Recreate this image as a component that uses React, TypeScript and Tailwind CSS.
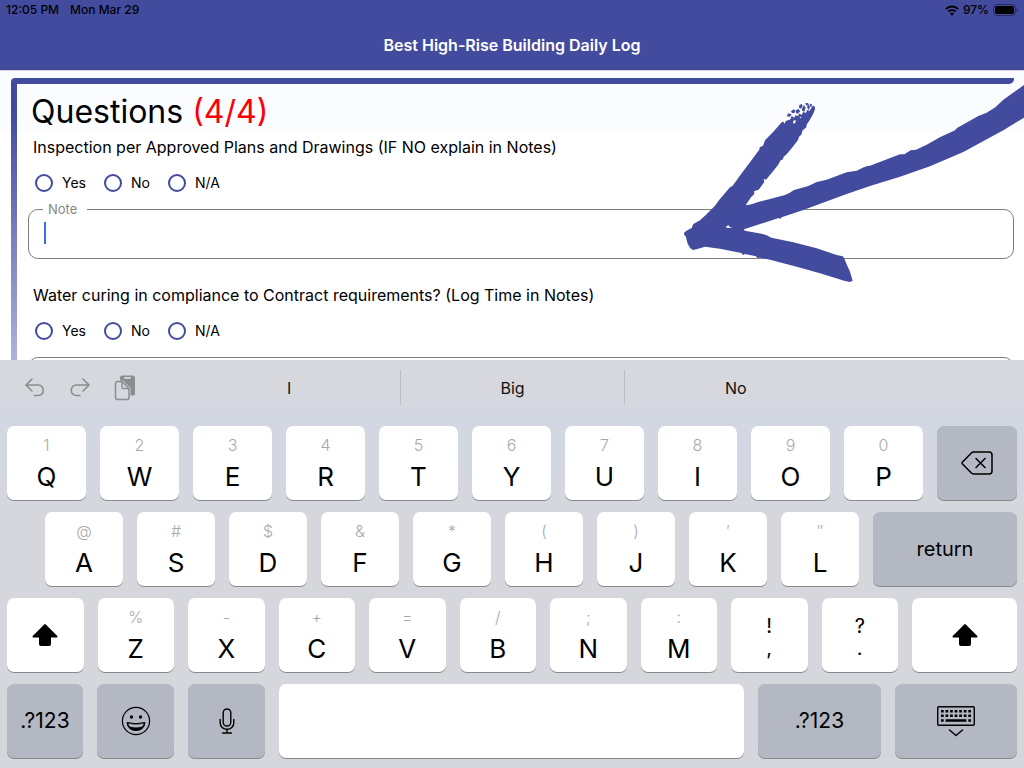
import React from "react";

type KeyProps = {
  label: string;
  hint?: string;
  className: string;
};

const keyBase =
  "flex h-[74px] min-w-0 basis-0 flex-col items-center rounded-[7px] shadow-[0_1px_0_#88898d]";
const whiteKey = "bg-white text-black";
const grayKey = "justify-center bg-[#b3b8c2] text-black";

function LetterKey({ label, hint, className }: KeyProps) {
  return (
    <button
      type="button"
      aria-label={label}
      className={`${keyBase} ${whiteKey} ${className} pt-2`}
    >
      <span className="text-[16px] leading-[22px] font-light text-[#a9a9ab]">{hint}</span>
      <span className="text-[26px] leading-[42px]">{label}</span>
    </button>
  );
}

function PunctuationKey({ label, hint, className }: KeyProps) {
  return (
    <button
      type="button"
      aria-label={label}
      className={`${keyBase} ${whiteKey} ${className} pt-4`}
    >
      <span className="text-[20px] leading-[24px]">{hint}</span>
      <span className="text-[20px] leading-[20px]">{label}</span>
    </button>
  );
}

function ShiftKey({ className }: { className: string }) {
  return (
    <button
      type="button"
      aria-label="shift"
      className={`${keyBase} ${whiteKey} ${className} justify-center`}
    >
      <svg width="26" height="22" viewBox="0 0 26 22" aria-hidden="true">
        <path
          d="M12.2.4Q13 -.2 13.8.4L25.3 12Q26 13.3 24.6 13.4H19V20Q19 22 17 22H9Q7 22 7 20V13.4H1.4Q0 13.3.7 12Z"
          fill="#000"
        />
      </svg>
    </button>
  );
}

const topRow = [
  ["Q", "1"],
  ["W", "2"],
  ["E", "3"],
  ["R", "4"],
  ["T", "5"],
  ["Y", "6"],
  ["U", "7"],
  ["I", "8"],
  ["O", "9"],
  ["P", "0"],
];
const homeRow = [
  ["A", "@"],
  ["S", "#"],
  ["D", "$"],
  ["F", "&"],
  ["G", "*"],
  ["H", "("],
  ["J", ")"],
  ["K", "′"],
  ["L", "″"],
];
const bottomRow = [
  ["Z", "%"],
  ["X", "-"],
  ["C", "+"],
  ["V", "="],
  ["B", "/"],
  ["N", ";"],
  ["M", ":"],
];

function Keyboard() {
  return (
    <section
      aria-label="Keyboard"
      className="relative shrink-0 bg-[linear-gradient(#d7d8dd_0px,#d6d8de_30px,#d3d7e2_60px,#d4d7e1_120px,#d6d7dc_160px)] pb-[10px]"
    >
      <div className="flex h-[66px] items-start pt-[10px]">
        <div className="flex h-[35px] w-[178px] shrink-0 items-center pl-6 text-[#8b8c90]">
          <button type="button" aria-label="Undo" className="w-[45px]">
            <svg width="22" height="22" viewBox="0 0 22 22" fill="none" stroke="currentColor" strokeWidth="1.6" strokeLinecap="round" strokeLinejoin="round">
              <path d="M8 2 2 8l6 6M2 8h12.2a5 5 0 0 1 5 5.2 5 5 0 0 1-5 5.3H10.5" />
            </svg>
          </button>
          <button type="button" aria-label="Redo" className="w-[45px]">
            <svg width="22" height="22" viewBox="0 0 22 22" fill="none" stroke="currentColor" strokeWidth="1.6" strokeLinecap="round" strokeLinejoin="round">
              <path d="m14 2 6 6-6 6M20 8H7.300a5 5 0 0 0-5 5.200 5 5 0 0 0 5 5.300H11" />
            </svg>
          </button>
          <button type="button" aria-label="Paste">
            <svg width="22" height="26" viewBox="0 0 22 26">
              <path d="M8.500 0.500H18.500a2.500 2.500 0 0 1 2.500 2.500v15a2.500 2.500 0 0 1-2.500 2.500h-2v-7.500L9 5.500H6V3a2.500 2.500 0 0 1 2.500-2.500Z" fill="currentColor" />
              <rect x="10" y="2" width="7" height="1.800" rx=".9" fill="#d6d8de" />
              <path d="M3.500 6.500h4.700l6.800 7v9a2 2 0 0 1-2 2H3.500a2 2 0 0 1-2-2v-14a2 2 0 0 1 2-2Z" fill="#d6d8de" stroke="currentColor" strokeWidth="1.500" />
              <path d="M8 7v5a1.500 1.500 0 0 0 1.500 1.500H15" fill="none" stroke="currentColor" strokeWidth="1.500" />
            </svg>
          </button>
        </div>
        <div className="flex h-[35px] flex-1 text-[16px] text-[#111]">
          <button type="button" className="flex-1">I</button>
          <button type="button" className="flex-1 border-x border-[#bcbec4]">Big</button>
          <button type="button" className="flex-1">No</button>
        </div>
        <div className="w-[177px] shrink-0" />
      </div>

      <div className="flex flex-col gap-3 px-[7px]">
        <div className="flex gap-[14px]">
          {topRow.map(([label, hint]) => (
            <LetterKey key={label} label={label} hint={hint} className="grow-[79]" />
          ))}
          <button type="button" aria-label="delete" className={`${keyBase} ${grayKey} grow-[80]`}>
            <svg width="32" height="24" viewBox="0 0 32 24" fill="none" stroke="#000" strokeWidth="1.5" strokeLinecap="round" strokeLinejoin="round">
              <path d="M12.500 1H28a3 3 0 0 1 3 3v16a3 3 0 0 1-3 3H12.500a3 3 0 0 1-2.100-.9L1.500 13a1.500 1.500 0 0 1 0-2l8.900-9.100a3 3 0 0 1 2.100-.9Z" />
              <path d="m15 7.500 9 9m0-9-9 9" />
            </svg>
          </button>
        </div>

        <div className="flex gap-[14px] pl-[38px]">
          {homeRow.map(([label, hint]) => (
            <LetterKey key={label} label={label} hint={hint} className="grow-[78]" />
          ))}
          <button type="button" className={`${keyBase} ${grayKey} grow-[144] text-[20px]`}>
            return
          </button>
        </div>

        <div className="flex gap-[14px]">
          <ShiftKey className="grow-[51]" />
          {bottomRow.map(([label, hint]) => (
            <LetterKey key={label} label={label} hint={hint} className="grow-[51]" />
          ))}
          <PunctuationKey label="," hint="!" className="grow-[51]" />
          <PunctuationKey label="." hint="?" className="grow-[51]" />
          <ShiftKey className="grow-[70]" />
        </div>

        <div className="flex gap-[14px]">
          <button type="button" className={`${keyBase} ${grayKey} grow-[76] text-[21px]`}>
            .?123
          </button>
          <button type="button" aria-label="Emoji" className={`${keyBase} ${grayKey} grow-[77]`}>
            <svg width="30" height="30" viewBox="0 0 30 30">
              <circle cx="15" cy="15" r="13.600" fill="none" stroke="#000" strokeWidth="1.200" />
              <ellipse cx="10.500" cy="11" rx="1.600" ry="1.700" />
              <ellipse cx="19.500" cy="11" rx="1.600" ry="1.700" />
              <path d="M6 16.500q9 2.500 18 0-1 8-9 8t-9-8Z" stroke="#000" strokeWidth="1" strokeLinejoin="round" />
              <path d="M7.300 17.500q7.700 2.200 15.400 0-.4 2.200-2 3.200-5.700 1.600-11.400 0-1.600-1-2-3.200Z" fill="#b3b8c2" />
            </svg>
          </button>
          <button type="button" aria-label="Dictate" className={`${keyBase} ${grayKey} grow-[77]`}>
            <svg width="16" height="26" viewBox="0 0 16 26" fill="none" stroke="#000" strokeWidth="1.400" strokeLinecap="round">
              <rect x="4.200" y="1" width="7.600" height="17" rx="3.800" />
              <path d="M1.200 11.500V15a6.500 6.200 0 0 0 6.800 6.200A6.500 6.200 0 0 0 14.800 15v-3.500M8 21.500V25M3.500 25h9" />
            </svg>
          </button>
          <button type="button" aria-label="space" className={`${keyBase} ${whiteKey} grow-[465]`} />
          <button type="button" className={`${keyBase} ${grayKey} grow-[123] text-[21px]`}>
            .?123
          </button>
          <button type="button" aria-label="Hide keyboard" className={`${keyBase} ${grayKey} grow-[122]`}>
            <svg width="38" height="32" viewBox="0 0 38 32" fill="none" stroke="#000">
              <rect x=".7" y="1.700" width="36.600" height="18.600" rx="1.200" strokeWidth="1.400" />
              <path d="M4 6.300h30M4 10.800h30" strokeWidth="2.600" strokeDasharray="2.700 1.850" />
              <path d="M4 15.500h2.700M8.600 15.500h20.800M31.300 15.500H34" strokeWidth="2.600" />
              <path d="m12.500 25 6.500 5.500 6.500-5.500" strokeWidth="1.500" strokeLinecap="round" strokeLinejoin="round" />
            </svg>
          </button>
        </div>
      </div>
    </section>
  );
}

function AnswerOptions({ name }: { name: string }) {
  return (
    <div className="flex h-[18px] items-center gap-[18px] pl-[7px] text-[14px] leading-[18px]">
      {["Yes", "No", "N/A"].map((answer) => (
        <label key={answer} className="flex items-center gap-[9px]">
          <input
            type="radio"
            name={name}
            value={answer}
            className="size-[18px] appearance-none rounded-full border-2 border-[#444b9f] checked:bg-[#444b9f]"
          />
          {answer}
        </label>
      ))}
    </div>
  );
}

function BrushArrow() {
  return (
    <svg
      className="pointer-events-none absolute top-0 right-0"
      width="354"
      height="220"
      viewBox="0 0 1062 660"
      aria-hidden="true"
    >
      <path
        fill="#434b9f"
        d="M43 484 52 478 65 471 70 459 90 448 108 431 135 404 148 386 180 349 188 344 215 307 240 274 262 244 268 236 269 229 279 224 285 208 310 182 322 169 335 154 340 152 344 158 347 150 356 147 362 141 365 135 373 140 376 133 384 135 388 127 394 132 400 123 407 125 411 117 418 120 424 111 429 114 434 107 435 115 429 130 416 152 411 159 408 170 398 178 394 191 387 197 384 207 368 228 350 250 341 257 339 265 332 268 324 282 308 302 288 326 281 324 283 333 266 356 252 361 253 369 243 379 227 403 245 400 262 394 300 384 345 372 358 366 372 357 415 345 440 333 470 326 530 304 560 299 578 290 592 285 600 284 690 250 703 250 722 238 738 236 770 221 811 198 855 178 861 171 925 135 950 125 976 109 1000 86 1062 42V140L1000 178 880 243 780 286 690 317 600 345 530 369 400 417 335 439 331 444 326 441 222 475 224 479 275 488 290 493 304 500 370 514 440 532 500 552 518 556 522 561 530 580 540 602 548 629 540 633 525 630 450 607 380 587 300 566 270 560 262 561 258 556 225 549 219 552 214 546 150 533 105 527 79 535 69 537 61 532 53 518 47 496 42 491Z"
      />
      <path
        fill="#434b9f"
        d="m350 136 5-9 10 3-5 7ZM363 121l8-6 5 4-3 8-7-1ZM378 117l7-3 6 7-9 8-5-5ZM388 102l7-3 3 6-5 8-6-3ZM396 113l6-11 5 8-4 12-7-3ZM405 97l9-1 3 5-7 3ZM411 107l5-6 4 8-5 9ZM420 98l6 2-2 9-5-3ZM427 105l6-1 1 7-8 10-2-9Z"
      />
      <path fill="#fff" d="m168 467 7-4 4 5 8 1-8 2-9-1ZM370 150l5-3 3 4-5 7-4-2ZM358 142l5-2-2 5-5 2ZM389 137l6 2-5 3ZM404 122l6-3-2 7Z" />
    </svg>
  );
}

export default function App() {
  return (
    <div className="flex h-screen flex-col overflow-hidden bg-white font-['Inter','Liberation_Sans',sans-serif] text-black">
      <header className="shrink-0 border-b border-[#d3d4da] bg-[#434b9f]">
        <div className="flex h-5 items-center justify-between pr-[6px] pl-[6px] text-[12px] font-medium">
          <div className="flex gap-[11px]">
            <span>12:05 PM</span>
            <span>Mon Mar 29</span>
          </div>
          <div className="flex items-center gap-1">
            <svg width="14" height="11" viewBox="0 0 14 11" fill="none" stroke="#000" strokeWidth="1.900">
              <path d="M.9 4.100a8.600 8.600 0 0 1 12.200 0M3.200 6.700a5.400 5.400 0 0 1 7.600 0" />
              <path d="m4.900 8.600a3 3 0 0 1 4.200 0L7 10.800Z" fill="#000" stroke="none" />
            </svg>
            <span>97%</span>
            <svg width="25" height="12" viewBox="0 0 25 12">
              <rect x=".5" y=".5" width="22" height="11" rx="3.200" fill="none" stroke="#000" strokeOpacity=".4" />
              <rect x="2" y="2" width="19" height="8" rx="1.700" />
              <path d="M23.500 4q1.300.6 1.300 2t-1.300 2Z" fillOpacity=".45" />
            </svg>
          </div>
        </div>
        <h1 className="flex h-[50px] items-center justify-center text-[16px] font-semibold text-white">
          Best High-Rise Building Daily Log
        </h1>
      </header>

      <main className="relative min-h-0 flex-1 overflow-hidden bg-[linear-gradient(#fbfcff_60px,#fff_60px)] pt-[7px] pr-[10px] pl-[11px]">
        <div className="h-[6px] rounded-tl-[4px] rounded-br-[5px] bg-[#434b9f]" />
        <div className="flex">
          <div className="w-[6px] shrink-0 bg-[linear-gradient(#434b9f_30px,#b0b4dc_280px)]" />
          <form className="flex min-w-0 flex-1 flex-col pl-[11px]">
            <h2 className="mt-2 pl-[3px] text-[32px] leading-[40px]">
              Questions <span className="text-[#fb0007]">(4/4)</span>
            </h2>
            <section className="h-[148px] pt-1">
              <p className="pl-[5px] text-[16px] leading-[22px]">
                Inspection per Approved Plans and Drawings (IF NO explain in Notes)
              </p>
              <div className="pt-[16px]">
                <AnswerOptions name="inspection" />
              </div>
              <fieldset className="relative mt-[9px] h-[58px] rounded-[10px] border border-[#7d7d7d] px-[14px]">
                <legend className="h-4 pr-[10px] pl-[5px] text-[13px] leading-[16px] text-[#858585]">
                  <label htmlFor="note">Note</label>
                </legend>
                <input
                  id="note"
                  type="text"
                  className="block h-8 w-full bg-transparent text-[16px] caret-transparent outline-none"
                />
                <span className="absolute top-[5px] left-[15px] h-[22px] w-[2px] bg-[#4169e1]" />
              </fieldset>
            </section>
            <section className="pt-1">
              <p className="pl-[5px] text-[16px] leading-[22px]">
                Water curing in compliance to Contract requirements? (Log Time in Notes)
              </p>
              <div className="pt-[16px]">
                <AnswerOptions name="curing" />
              </div>
              <input
                type="text"
                aria-label="Note"
                className="mt-[17px] block h-[51px] w-full rounded-[10px] border border-[#7d7d7d] px-[14px] text-[16px] outline-none"
              />
            </section>
          </form>
        </div>
        <BrushArrow />
      </main>

      <Keyboard />
    </div>
  );
}
